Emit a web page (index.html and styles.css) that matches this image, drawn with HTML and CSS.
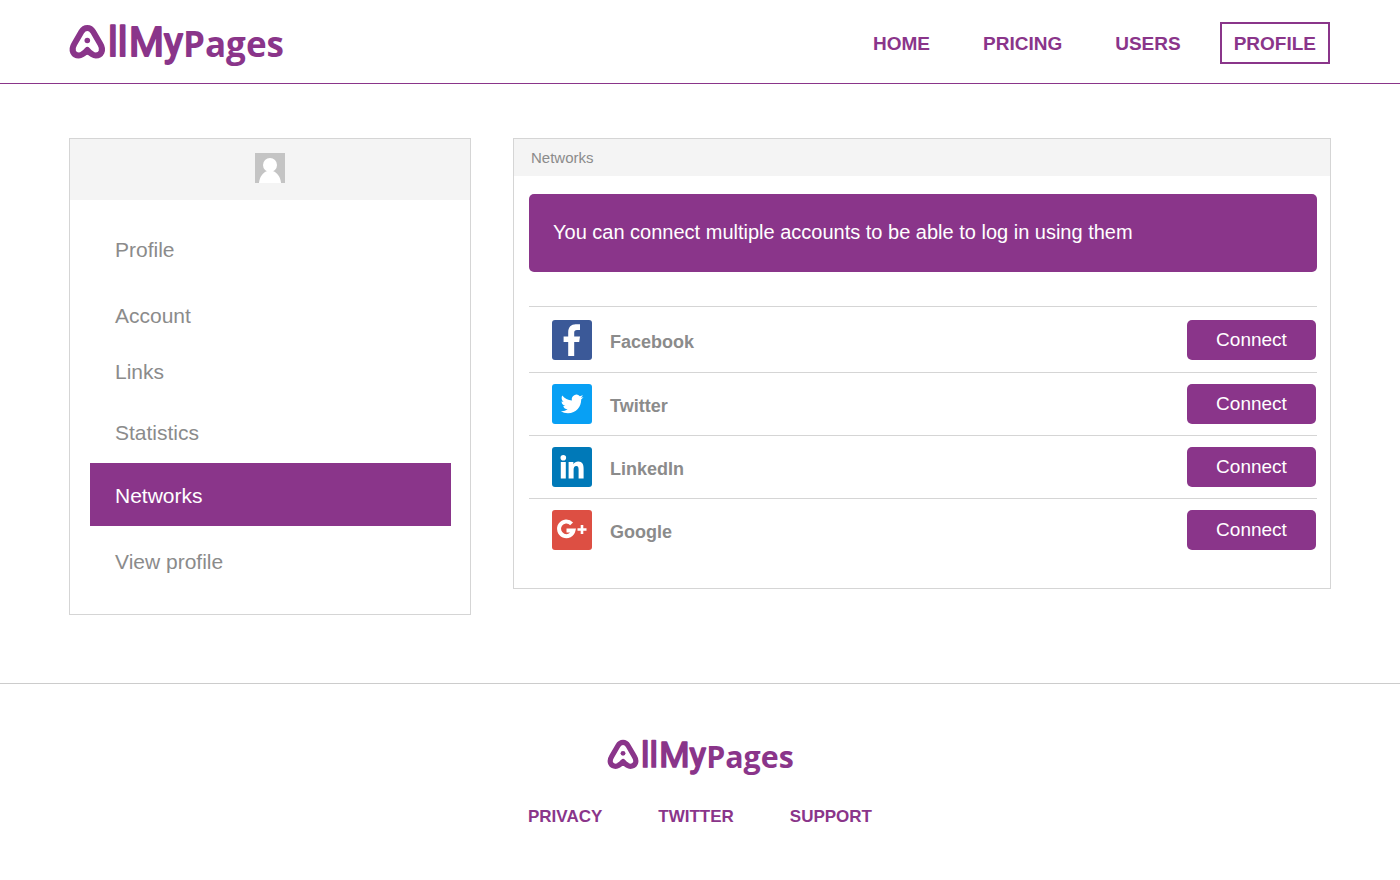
FILE: index.html
```html
<!DOCTYPE html>
<html lang="en">
<head>
<meta charset="utf-8">
<title>AllMyPages - Networks</title>
<link rel="stylesheet" href="styles.css">
</head>
<body>
<header class="header">
  <a class="brand" href="#" aria-label="AllMyPages">
    <svg class="logo" viewBox="0 -6 213 54">
      <path class="logo-mark" d="M17.300 6C20 6 21.700 7.300 23.200 9.800L30.300 22C34.200 28.400 31 33.400 25.800 33.400C22.200 33.400 20 31 17.300 28C14.600 31 12.400 33.400 8.800 33.400C3.600 33.400 .4 28.400 4.300 22L11.400 9.800C12.900 7.300 14.600 6 17.300 6Z"/>
      <path class="logo-dot" d="M17.300 25.500L24 34L17.300 32.800L10.600 34Z"/>
      <circle class="logo-dot" cx="17.300" cy="18.500" r="2.800"/>
      <text class="logo-first" x="38" y="34">ll</text>
      <text class="logo-first" x="59" y="34">My</text>
      <text class="logo-second" x="113" y="35">Pages</text>
    </svg>
  </a>
  <nav class="nav">
    <a class="nav-link" href="#">HOME</a>
    <a class="nav-link" href="#">PRICING</a>
    <a class="nav-link" href="#">USERS</a>
    <a class="nav-link nav-link-boxed" href="#">PROFILE</a>
  </nav>
</header>
<main class="main">
  <aside class="panel">
    <div class="user">
      <svg class="avatar" viewBox="0 0 30 30"><path fill="#c4c4c4" d="M0 0h30v30H0z"/><circle cx="15" cy="12" r="7" fill="#fff"/><path fill="#fff" d="M4 30C4.500 24 8 19 12.500 18h5C22 19 25.500 24 26 30z"/></svg>
    </div>
    <nav class="menu">
      <a class="menu-link" href="#">Profile</a>
      <a class="menu-link" href="#">Account</a>
      <a class="menu-link" href="#">Links</a>
      <a class="menu-link" href="#">Statistics</a>
      <a class="menu-link menu-link-active" href="#">Networks</a>
      <a class="menu-link" href="#">View profile</a>
    </nav>
  </aside>
  <section class="panel">
    <h1 class="panel-title">Networks</h1>
    <div class="panel-body">
      <p class="notice">You can connect multiple accounts to be able to log in using them</p>
      <ul class="networks">
        <li class="network">
          <svg class="network-icon" viewBox="0 0 40 40"><rect width="40" height="40" rx="3" fill="#3b5998"/><path fill="#fff" d="M16.200 36V22H11.600v-5.500h4.600V12.500C16.200 7 19.200 4.200 23.700 4.200h4.300V10h-3c-2 0-2.800 1-2.800 2.800v3.700H28L27.200 22h-5v14z"/></svg>
          <span class="network-name">Facebook</span>
          <button class="connect" type="button">Connect</button>
        </li>
        <li class="network">
          <svg class="network-icon" viewBox="0 0 40 40"><rect width="40" height="40" rx="3" fill="#08a0f4"/><path fill="#fff" transform="translate(8.700 8.600) scale(.95)" d="M23.950 4.570a10 10 0 0 1-2.820.77 4.960 4.960 0 0 0 2.160-2.720c-.95.550-2 .95-3.120 1.180a4.920 4.920 0 0 0-8.380 4.480C7.690 8.090 4.070 6.130 1.640 3.160a4.820 4.820 0 0 0-.66 2.480c0 1.710.87 3.210 2.190 4.100a4.900 4.900 0 0 1-2.230-.62v.06a4.920 4.920 0 0 0 3.950 4.830 5 5 0 0 1-2.210.08 4.940 4.940 0 0 0 4.600 3.420A9.870 9.870 0 0 1 0 19.540a13.990 13.990 0 0 0 7.560 2.210c9.050 0 14-7.500 14-13.980 0-.21 0-.42-.02-.63a9.940 9.940 0 0 0 2.410-2.570z"/></svg>
          <span class="network-name">Twitter</span>
          <button class="connect" type="button">Connect</button>
        </li>
        <li class="network">
          <svg class="network-icon" viewBox="0 0 40 40"><rect width="40" height="40" rx="3" fill="#0079b8"/><circle cx="11.300" cy="10.700" r="2.800" fill="#fff"/><path fill="#fff" d="M8.800 15h5v16.500h-5zM16.600 15h4.800v2.200c1-1.700 2.700-2.600 4.800-2.600 4.200 0 5.400 2.900 5.400 7.200v9.700h-5v-8.700c0-2.300-.4-3.900-2.300-3.900s-2.700 1.600-2.700 3.800v8.800h-5z"/></svg>
          <span class="network-name">LinkedIn</span>
          <button class="connect" type="button">Connect</button>
        </li>
        <li class="network">
          <svg class="network-icon" viewBox="0 0 40 40"><rect width="40" height="40" rx="3" fill="#dd4f43"/><path fill="none" stroke="#fff" stroke-width="4" d="M19.600 13.800A7.300 7.300 0 1 0 21.500 20.400H14.500"/><path fill="none" stroke="#fff" stroke-width="2.600" d="M25.500 19.500h9M30 15v9"/></svg>
          <span class="network-name">Google</span>
          <button class="connect" type="button">Connect</button>
        </li>
      </ul>
    </div>
  </section>
</main>
<footer class="footer">
  <svg class="logo logo-small" viewBox="0 -6 213 54" role="img" aria-label="AllMyPages">
    <path class="logo-mark" d="M17.300 6C20 6 21.700 7.300 23.200 9.800L30.300 22C34.200 28.400 31 33.400 25.800 33.400C22.200 33.400 20 31 17.300 28C14.600 31 12.400 33.400 8.800 33.400C3.600 33.400 .4 28.400 4.300 22L11.400 9.800C12.900 7.300 14.600 6 17.300 6Z"/>
    <path class="logo-dot" d="M17.300 25.500L24 34L17.300 32.800L10.600 34Z"/>
    <circle class="logo-dot" cx="17.300" cy="18.500" r="2.800"/>
    <text class="logo-first" x="38" y="34">ll</text>
    <text class="logo-first" x="59" y="34">My</text>
    <text class="logo-second" x="113" y="35">Pages</text>
  </svg>
  <nav class="footer-nav">
    <a class="footer-link" href="#">PRIVACY</a>
    <a class="footer-link" href="#">TWITTER</a>
    <a class="footer-link" href="#">SUPPORT</a>
  </nav>
</footer>
</body>
</html>
```

FILE: styles.css
```css
* { box-sizing: border-box; }
body {
  margin: 0;
  background: #fff;
  color: #8b8b8b;
  font-family: "Liberation Sans", Arial, sans-serif;
}
a { color: inherit; text-decoration: none; }

.logo { display: block; width: 213px; height: 54px; overflow: visible; }
.logo-small { width: 185px; height: 47px; }
.logo-mark { fill: none; stroke: #8a358a; stroke-width: 6; stroke-linejoin: round; }
.logo-dot { fill: #8a358a; }
.logo-first {
  font: 400 40px Roboto, sans-serif;
  fill: #8a358a;
  stroke: #8a358a;
  stroke-width: 2;
  stroke-linejoin: round;
}
.logo-second { font: 700 35px "Open Sans", sans-serif; fill: #8a358a; }

.header {
  display: flex;
  justify-content: space-between;
  align-items: center;
  padding: 16px 70px 13px;
  border-bottom: 1px solid #8a358a;
}
.nav { display: flex; gap: 25px; }
.nav-link {
  padding: 10px 12px 8px;
  border: 2px solid transparent;
  color: #8a358a;
  font-size: 19px;
  font-weight: 700;
  line-height: 20px;
}
.nav-link-boxed { border-color: #8a358a; }

.main {
  display: grid;
  grid-template-columns: 402fr 818fr;
  gap: 42px;
  align-items: start;
  padding: 54px 69px 68px;
}
.panel { border: 1px solid #d5d5d5; }
.user {
  display: flex;
  justify-content: center;
  padding: 14px 0 17px;
  background: #f4f4f4;
}
.avatar { display: block; width: 30px; height: 30px; }
.menu {
  display: grid;
  grid-template-rows: 80px 66px 56px 61px 63px 66px;
  align-items: end;
  padding: 0 19px 22px 20px;
}
.menu-link { padding: 21px 25px 18px; font-size: 21px; line-height: 24px; }
.menu-link-active { background: #8a358a; color: #fff; }

.panel-title {
  margin: 0;
  padding: 10px 17px 9px;
  background: #f4f4f4;
  font-size: 15px;
  font-weight: 400;
  line-height: 18px;
}
.panel-body { padding: 18px 13px 27px 15px; }
.notice {
  margin: 0 0 34px;
  padding: 26px 24px 28px;
  border-radius: 5px;
  background: #8a358a;
  color: #fff;
  font-size: 20px;
  line-height: 24px;
}
.networks { margin: 0; padding: 0; list-style: none; }
.network {
  display: flex;
  align-items: center;
  gap: 18px;
  padding: 11px 1px 11px 23px;
  border-top: 1px solid #d5d5d5;
}
.network:first-child { padding-top: 13px; padding-bottom: 12px; }
.network-icon { width: 40px; height: 40px; }
.network-name { flex: 1; padding-top: 4px; font-size: 18px; font-weight: 700; line-height: 20px; }
.connect {
  width: 129px;
  height: 40px;
  padding: 0;
  border: 0;
  border-radius: 5px;
  background: #8a358a;
  color: #fff;
  font: 19px "Liberation Sans", Arial, sans-serif;
}

.footer {
  display: flex;
  flex-direction: column;
  align-items: center;
  gap: 28px;
  padding: 48px 69px;
  border-top: 1px solid #ccc;
}
.footer-nav { display: flex; gap: 56px; }
.footer-link { color: #8a358a; font-size: 17px; font-weight: 700; line-height: 20px; }
```
